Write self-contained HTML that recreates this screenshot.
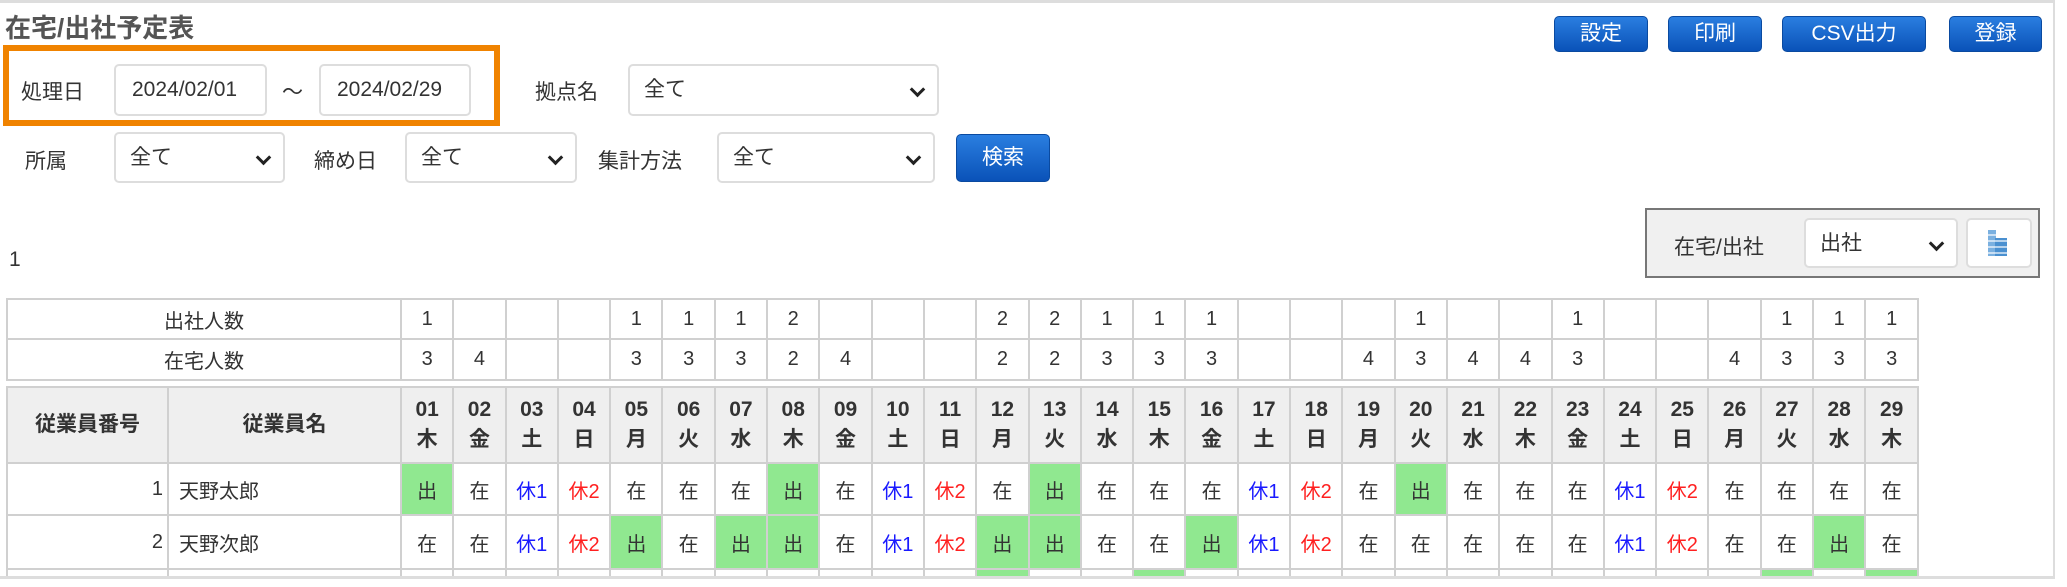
<!DOCTYPE html>
<html><head><meta charset="utf-8"><style>
html,body{margin:0;width:2067px;height:587px;overflow:hidden}
body{background:#fff;font-family:"Liberation Sans","Noto Sans CJK JP",sans-serif;color:#333;position:relative}
.a{position:absolute}
.frame{left:0;top:0;width:2055px;height:585px;border-top:3px solid #ddd;border-right:2px solid #ddd;box-sizing:border-box}
.title{left:5px;top:8px;font-size:26px;font-weight:bold;color:#555}
.lbl{font-size:21px;color:#333}
.inp{border:2px solid #ddd;border-radius:5px;background:#fff;box-sizing:border-box;font-size:21px;line-height:48px;padding-left:16px}
.sel{border:2px solid #ddd;border-radius:5px;background:#fff;box-sizing:border-box;font-size:21px;line-height:48px;padding-left:14px}
.sel:after{content:"";position:absolute;right:14px;top:18px;width:8px;height:8px;border-right:3px solid #222;border-bottom:3px solid #222;transform:rotate(45deg)}
.btn{background:linear-gradient(#2a7ee0,#0a52b8);border:1px solid #0a4aa0;border-radius:5px;color:#fff;font-size:21px;text-align:center;box-sizing:border-box}
table{border-collapse:collapse;table-layout:fixed;position:absolute;left:6px}
td{border:2px solid #d0d0d0;text-align:center;font-size:20px;padding:0;overflow:hidden}
.h td{background:#efefef;font-weight:bold;font-size:21px;line-height:30px}
.g{background:#90e890}
.b{color:#1a1aff}.r{color:#ff2020}
.cv{z-index:5}
</style></head><body>
<div class="a frame"></div>
<div class="a title">在宅/出社予定表</div>
<div class="a" style="left:3px;top:45px;width:497px;height:81px;border:6px solid #f08300;box-sizing:border-box"></div>
<div class="a lbl" style="left:21px;top:76px">処理日</div>
<div class="a inp" style="left:114px;top:64px;width:153px;height:52px">2024/02/01</div>
<div class="a lbl" style="left:282px;top:76px">～</div>
<div class="a inp" style="left:319px;top:64px;width:152px;height:52px">2024/02/29</div>
<div class="a lbl" style="left:535px;top:76px">拠点名</div>
<div class="a sel" style="left:628px;top:64px;width:311px;height:52px">全て</div>
<div class="a lbl" style="left:25px;top:145px">所属</div>
<div class="a sel" style="left:114px;top:132px;width:171px;height:51px">全て</div>
<div class="a lbl" style="left:314px;top:145px">締め日</div>
<div class="a sel" style="left:405px;top:132px;width:172px;height:51px">全て</div>
<div class="a lbl" style="left:598px;top:145px">集計方法</div>
<div class="a sel" style="left:717px;top:132px;width:218px;height:51px">全て</div>
<div class="a btn" style="left:956px;top:134px;width:94px;height:48px;line-height:46px">検索</div>
<div class="a btn" style="left:1554px;top:16px;width:94px;height:36px;line-height:34px">設定</div>
<div class="a btn" style="left:1668px;top:16px;width:94px;height:36px;line-height:34px">印刷</div>
<div class="a btn" style="left:1782px;top:16px;width:144px;height:36px;line-height:34px">CSV出力</div>
<div class="a btn" style="left:1949px;top:16px;width:93px;height:36px;line-height:34px">登録</div>
<div class="a" style="left:1645px;top:208px;width:395px;height:70px;background:#f0f0f0;border:2px solid #777;box-sizing:border-box"></div>
<div class="a lbl" style="left:1674px;top:231px">在宅/出社</div>
<div class="a sel" style="left:1804px;top:218px;width:154px;height:50px">出社</div>
<div class="a" style="left:1966px;top:218px;width:66px;height:50px;border:2px solid #ddd;border-radius:5px;background:#fff;box-sizing:border-box">
<svg width="62" height="46" viewBox="0 0 62 46"><rect x="20" y="10" width="8" height="26" fill="#7ab0e0"/><rect x="27" y="18" width="12" height="18" fill="#4a90d0"/><rect x="20" y="14" width="19" height="2" fill="#fff" opacity=".6"/><rect x="20" y="20" width="19" height="2" fill="#fff" opacity=".6"/><rect x="20" y="26" width="19" height="2" fill="#fff" opacity=".6"/><rect x="20" y="32" width="19" height="2" fill="#fff" opacity=".6"/></svg></div>
<div class="a" style="left:9px;top:248px;font-size:21px">1</div>
<table id="t1" style="top:298px;width:1913px"></table>
<table id="t2" style="top:386px;width:1913px"></table>
<div class="a cv" style="left:0;top:578px;width:2067px;height:20px;background:#fff"></div>
<div class="a cv" style="left:0;top:576px;width:2055px;height:3px;background:#ddd"></div>
<script>
var dw='木金土日月火水'.split('');
var o='1,,,,1,1,1,2,,,,2,2,1,1,1,,,,1,,,1,,,,1,1,1'.split(',');
var z='3,4,,,3,3,3,2,4,,,2,2,3,3,3,,,4,3,4,4,3,,,4,3,3,3'.split(',');
var dc='<colgroup><col style="width:394px">'+'<col>'.repeat(29)+'</colgroup>';
var h=dc+'<tr style="height:40px"><td>出社人数</td>'+o.map(x=>'<td>'+x+'</td>').join('')+'</tr><tr style="height:41px"><td>在宅人数</td>'+z.map(x=>'<td>'+x+'</td>').join('')+'</tr>';
document.getElementById('t1').innerHTML=h;
var e1='出 在 休1 休2 在 在 在 出 在 休1 休2 在 出 在 在 在 休1 休2 在 出 在 在 在 休1 休2 在 在 在 在'.split(' ');
var e2='在 在 休1 休2 出 在 出 出 在 休1 休2 出 出 在 在 出 休1 休2 在 在 在 在 在 休1 休2 在 在 出 在'.split(' ');
var g3=[11,14,26,28];
function c(x){var k=x=='出'?'g':x=='休1'?'b':x=='休2'?'r':'';return '<td class="'+k+'">'+x+'</td>'}
var m='<colgroup><col style="width:161px"><col style="width:233px">'+'<col>'.repeat(29)+'</colgroup><tr class="h" style="height:76px"><td>従業員番号</td><td>従業員名</td>';
for(var i=0;i<29;i++)m+='<td>'+String(i+1).padStart(2,'0')+'<br>'+dw[i%7]+'</td>';
m+='</tr><tr style="height:52px"><td style="text-align:right;padding-right:4px">1</td><td style="text-align:left;padding-left:10px">天野太郎</td>'+e1.map(c).join('')+'</tr>';
m+='<tr style="height:54px"><td style="text-align:right;padding-right:4px">2</td><td style="text-align:left;padding-left:10px">天野次郎</td>'+e2.map(c).join('')+'</tr>';
m+='<tr style="height:30px"><td></td><td></td>';for(var i=0;i<29;i++)m+='<td class="'+(g3.indexOf(i)>=0?'g':'')+'"></td>';m+='</tr>';
document.getElementById('t2').innerHTML=m;
</script>
</body></html>
